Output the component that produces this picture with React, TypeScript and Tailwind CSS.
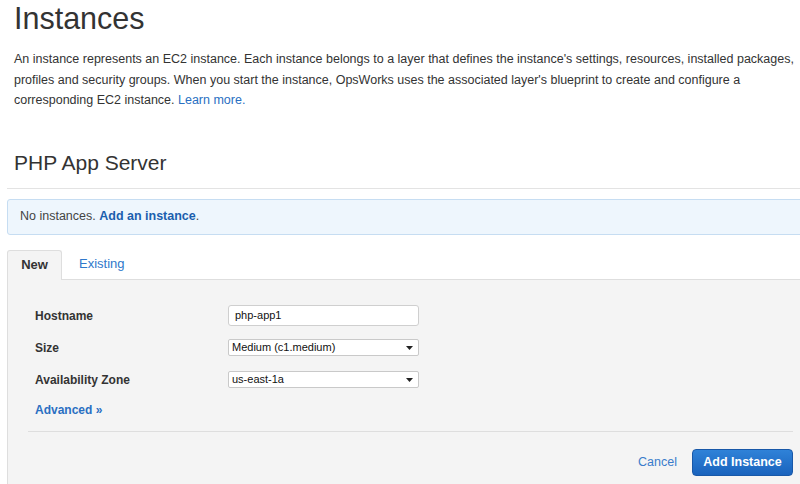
const font = { fontFamily: '"Liberation Sans", Arial, sans-serif' };

function Caret() {
  return (
    <svg width="7" height="4" viewBox="0 0 7 4" className="shrink-0">
      <path d="M0 0 L7 0 L3.5 4 Z" fill="#222" />
    </svg>
  );
}

function FakeSelect({ value }: { value: string }) {
  return (
    <div className="flex h-[17px] w-[191px] items-center justify-between rounded-[2px] border border-[#c9c9c9] bg-white pl-[3px] pr-[5px] text-[11px] text-[#111]">
      <span>{value}</span>
      <Caret />
    </div>
  );
}

export default function App() {
  return (
    <div className="h-[484px] w-[800px] overflow-hidden bg-white text-[#333]" style={font}>
      <div className="w-[808px] pl-[7px]">
        {/* page header */}
        <div className="px-[7px]">
          <h1 className="text-[30.5px] leading-[36px] font-normal text-[#333]">Instances</h1>
          <p className="mt-[13px] whitespace-nowrap text-[12.5px] leading-[20.5px] text-[#333]">
            An instance represents an EC2 instance. Each instance belongs to a layer that defines the instance's settings, resources, installed packages,
            <br />
            profiles and security groups. When you start the instance, OpsWorks uses the associated layer's blueprint to create and configure a
            <br />
            corresponding EC2 instance. <a className="text-[#2a6fc2]">Learn more.</a>
          </p>
          <h2 className="mt-[40px] text-[21px] leading-[24px] font-normal text-[#333]">PHP App Server</h2>
        </div>
        <div className="mt-[13px] border-t border-[#e3e3e3]" />

        {/* empty notice */}
        <div className="mt-[10px] flex h-[36px] items-center rounded-[3px] border border-[#c6ddf2] bg-[#eef6fd] px-[12px] text-[12.5px] text-[#444]">
          <span>
            No instances. <a className="font-bold text-[#1b5fae]">Add an instance</a>.
          </span>
        </div>

        {/* tabs */}
        <div className="mt-[15px] flex h-[30px] items-end border-b border-[#dedede]">
          <div className="-mb-px flex h-[30px] w-[55px] items-center justify-center rounded-t-[3px] border border-b-0 border-[#dedede] bg-[#f4f4f4] text-[13px] font-bold text-[#333]">
            New
          </div>
          <div className="flex h-[30px] items-center pl-[17px] text-[13px] text-[#2f78cb]">Existing</div>
        </div>

        {/* new instance form */}
        <div className="border-l border-[#dedede] bg-[#f4f4f4] pb-[20px] pl-[20px] pr-[15px] pt-[20px]">
          <div className="pl-[7px]">
            <div className="flex h-[32px] items-center">
              <label className="w-[193px] text-[12px] font-bold text-[#333]">Hostname</label>
              <div className="flex h-[21px] w-[191px] items-center rounded-[3px] border border-[#cfcfcf] bg-white px-[6px] text-[11px] text-[#111]">
                php-app1
              </div>
            </div>
            <div className="flex h-[32px] items-center">
              <label className="w-[193px] text-[12px] font-bold text-[#333]">Size</label>
              <FakeSelect value="Medium (c1.medium)" />
            </div>
            <div className="flex h-[32px] items-center">
              <label className="w-[193px] text-[12px] font-bold text-[#333]">Availability Zone</label>
              <FakeSelect value="us-east-1a" />
            </div>
            <a className="mt-[4px] block text-[12px] leading-[20px] font-bold text-[#2a6fc2]">Advanced »</a>
          </div>
          <div className="mt-[11px] border-t border-[#dedede]" />
          <div className="mt-[17px] flex items-center justify-end gap-[15px]">
            <a className="text-[12.5px] text-[#3a7ccb]">Cancel</a>
            <button className="h-[27px] w-[101px] rounded-[4px] border border-[#1858a8] bg-gradient-to-b from-[#2f82d8] to-[#1a63bd] text-[12.5px] font-bold text-white">
              Add Instance
            </button>
          </div>
        </div>
      </div>
    </div>
  );
}
